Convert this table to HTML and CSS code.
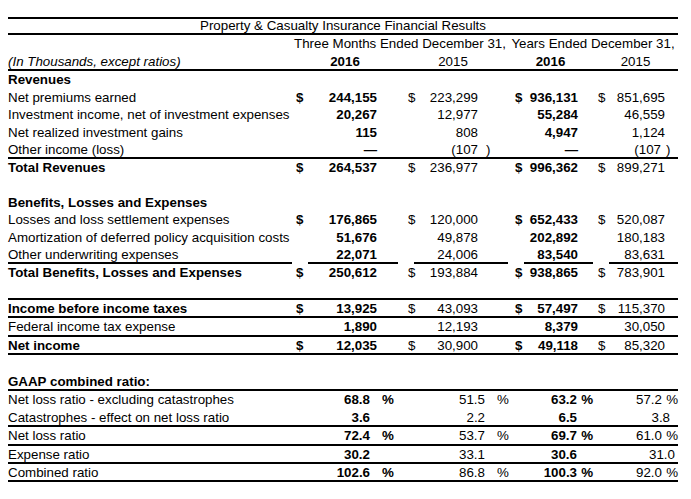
FILE: index.html
```html
<!DOCTYPE html>
<html>
<head>
<meta charset="utf-8">
<link rel="stylesheet" href="styles.css">
</head>
<body>
<div class="sheet">
  <div class="sec hdr">
    <div class="row ln-tb"><div class="title">Property &amp; Casualty Insurance Financial Results</div></div>
    <div class="row"><div></div><div class="per p1">Three Months Ended December 31,</div><div class="per p2">Years Ended December 31,</div></div>
    <div class="row ln-b"><div class="lbl it">(In Thousands, except ratios)</div><div class="yr b">2016</div><div class="yr">2015</div><div class="yr b">2016</div><div class="yr">2015</div></div>
  </div>

  <div class="sec s1">
    <div class="row"><div class="lbl b">Revenues</div></div>
    <div class="row"><div class="lbl">Net premiums earned</div>
      <div class="c c1 b"><span class="d">$</span><span class="n">244,155</span><span class="s"></span></div>
      <div class="c c2"><span class="d">$</span><span class="n">223,299</span><span class="s"></span></div>
      <div class="c c3 b"><span class="d">$</span><span class="n">936,131</span><span class="s"></span></div>
      <div class="c c4"><span class="d">$</span><span class="n">851,695</span><span class="s"></span></div>
    </div>
    <div class="row"><div class="lbl">Investment income, net of investment expenses</div>
      <div class="c c1 b"><span class="n">20,267</span><span class="s"></span></div>
      <div class="c c2"><span class="n">12,977</span><span class="s"></span></div>
      <div class="c c3 b"><span class="n">55,284</span><span class="s"></span></div>
      <div class="c c4"><span class="n">46,559</span><span class="s"></span></div>
    </div>
    <div class="row"><div class="lbl">Net realized investment gains</div>
      <div class="c c1 b"><span class="n">115</span><span class="s"></span></div>
      <div class="c c2"><span class="n">808</span><span class="s"></span></div>
      <div class="c c3 b"><span class="n">4,947</span><span class="s"></span></div>
      <div class="c c4"><span class="n">1,124</span><span class="s"></span></div>
    </div>
    <div class="row ln-b"><div class="lbl">Other income (loss)</div>
      <div class="c c1 b"><span class="n">—</span><span class="s"></span></div>
      <div class="c c2"><span class="n">(107</span><span class="s p">)</span></div>
      <div class="c c3 b"><span class="n">—</span><span class="s"></span></div>
      <div class="c c4"><span class="n">(107</span><span class="s p">)</span></div>
    </div>
    <div class="row"><div class="lbl b">Total Revenues</div>
      <div class="c c1 b"><span class="d">$</span><span class="n">264,537</span><span class="s"></span></div>
      <div class="c c2"><span class="d">$</span><span class="n">236,977</span><span class="s"></span></div>
      <div class="c c3 b"><span class="d">$</span><span class="n">996,362</span><span class="s"></span></div>
      <div class="c c4"><span class="d">$</span><span class="n">899,271</span><span class="s"></span></div>
    </div>
    <div class="row"></div>
    <div class="row"><div class="lbl b">Benefits, Losses and Expenses</div></div>
    <div class="row"><div class="lbl">Losses and loss settlement expenses</div>
      <div class="c c1 b"><span class="d">$</span><span class="n">176,865</span><span class="s"></span></div>
      <div class="c c2"><span class="d">$</span><span class="n">120,000</span><span class="s"></span></div>
      <div class="c c3 b"><span class="d">$</span><span class="n">652,433</span><span class="s"></span></div>
      <div class="c c4"><span class="d">$</span><span class="n">520,087</span><span class="s"></span></div>
    </div>
    <div class="row"><div class="lbl">Amortization of deferred policy acquisition costs</div>
      <div class="c c1 b"><span class="n">51,676</span><span class="s"></span></div>
      <div class="c c2"><span class="n">49,878</span><span class="s"></span></div>
      <div class="c c3 b"><span class="n">202,892</span><span class="s"></span></div>
      <div class="c c4"><span class="n">180,183</span><span class="s"></span></div>
    </div>
    <div class="row"><div class="lbl ln-b">Other underwriting expenses</div>
      <div class="c c1 b seg"><span class="n">22,071</span><span class="s"></span></div>
      <div class="c c2 seg"><span class="n">24,006</span><span class="s"></span></div>
      <div class="c c3 b seg"><span class="n">83,540</span><span class="s"></span></div>
      <div class="c c4 seg"><span class="n">83,631</span><span class="s"></span></div>
    </div>
  </div>

  <div class="sec s2">
    <div class="row"><div class="lbl b">Total Benefits, Losses and Expenses</div>
      <div class="c c1 b"><span class="d">$</span><span class="n">250,612</span><span class="s"></span></div>
      <div class="c c2"><span class="d">$</span><span class="n">193,884</span><span class="s"></span></div>
      <div class="c c3 b"><span class="d">$</span><span class="n">938,865</span><span class="s"></span></div>
      <div class="c c4"><span class="d">$</span><span class="n">783,901</span><span class="s"></span></div>
    </div>
    <div class="row ln-b"></div>
    <div class="row ln-b"><div class="lbl b">Income before income taxes</div>
      <div class="c c1 b"><span class="d">$</span><span class="n">13,925</span><span class="s"></span></div>
      <div class="c c2"><span class="d">$</span><span class="n">43,093</span><span class="s"></span></div>
      <div class="c c3 b"><span class="d">$</span><span class="n">57,497</span><span class="s"></span></div>
      <div class="c c4"><span class="d">$</span><span class="n">115,370</span><span class="s"></span></div>
    </div>
    <div class="row ln-b"><div class="lbl">Federal income tax expense</div>
      <div class="c c1 b"><span class="n">1,890</span><span class="s"></span></div>
      <div class="c c2"><span class="n">12,193</span><span class="s"></span></div>
      <div class="c c3 b"><span class="n">8,379</span><span class="s"></span></div>
      <div class="c c4"><span class="n">30,050</span><span class="s"></span></div>
    </div>
    <div class="row ln-b"><div class="lbl b">Net income</div>
      <div class="c c1 b"><span class="d">$</span><span class="n">12,035</span><span class="s"></span></div>
      <div class="c c2"><span class="d">$</span><span class="n">30,900</span><span class="s"></span></div>
      <div class="c c3 b"><span class="d">$</span><span class="n">49,118</span><span class="s"></span></div>
      <div class="c c4"><span class="d">$</span><span class="n">85,320</span><span class="s"></span></div>
    </div>
    <div class="row"></div>
    <div class="row ln-b"><div class="lbl b">GAAP combined ratio:</div></div>
    <div class="row"><div class="lbl">Net loss ratio - excluding catastrophes</div>
      <div class="c c1 r b"><span class="n">68.8</span><span class="s">%</span></div>
      <div class="c c2 r"><span class="n">51.5</span><span class="s">%</span></div>
      <div class="c c3 r b"><span class="n">63.2</span><span class="s">%</span></div>
      <div class="c c4 r"><span class="n">57.2</span><span class="s">%</span></div>
    </div>
    <div class="row ln-b"><div class="lbl">Catastrophes - effect on net loss ratio</div>
      <div class="c c1 r b"><span class="n">3.6</span><span class="s"></span></div>
      <div class="c c2 r"><span class="n">2.2</span><span class="s"></span></div>
      <div class="c c3 r b"><span class="n">6.5</span><span class="s"></span></div>
      <div class="c c4"><span class="n">3.8</span><span class="s x1"></span></div>
    </div>
    <div class="row ln-b"><div class="lbl">Net loss ratio</div>
      <div class="c c1 r b"><span class="n">72.4</span><span class="s">%</span></div>
      <div class="c c2 r"><span class="n">53.7</span><span class="s">%</span></div>
      <div class="c c3 r b"><span class="n">69.7</span><span class="s">%</span></div>
      <div class="c c4 r"><span class="n">61.0</span><span class="s">%</span></div>
    </div>
    <div class="row ln-b"><div class="lbl">Expense ratio</div>
      <div class="c c1 r b"><span class="n">30.2</span><span class="s"></span></div>
      <div class="c c2 r"><span class="n">33.1</span><span class="s"></span></div>
      <div class="c c3 r b"><span class="n">30.6</span><span class="s"></span></div>
      <div class="c c4"><span class="n">31.0</span><span class="s x2"></span></div>
    </div>
    <div class="row ln-b"><div class="lbl">Combined ratio</div>
      <div class="c c1 r b"><span class="n">102.6</span><span class="s">%</span></div>
      <div class="c c2 r"><span class="n">86.8</span><span class="s">%</span></div>
      <div class="c c3 r b"><span class="n">100.3</span><span class="s">%</span></div>
      <div class="c c4 r"><span class="n">92.0</span><span class="s">%</span></div>
    </div>
  </div>
</div>
</body>
</html>
```

FILE: styles.css
```css
* { box-sizing: border-box; }
html, body { margin: 0; padding: 0; background: #fff; }
body {
  font-family: "Liberation Sans", Arial, sans-serif;
  font-size: 13.33px;
  color: #000;
}
.sheet { width: 670px; margin: 17px 0 0 8px; }
.row {
  display: grid;
  grid-template-columns: 284px 106px 110px 85px 85px;
  white-space: nowrap;
}
.hdr .row { height: 18px; line-height: 18px; }
.s1 .row { height: 17.55px; line-height: 17.55px; }
.s2 .row { height: 18.17px; line-height: 18.17px; }

.title { grid-column: 1 / -1; text-align: center; }
.p1 { grid-column: 2 / 4; text-align: center; }
.p2 { grid-column: 4 / 6; text-align: center; }
.yr { text-align: center; }
.it { font-style: italic; }
.b { font-weight: bold; }

.ln-b { background: linear-gradient(#000, #000) left bottom / 100% 2px no-repeat; }
.ln-tb {
  background:
    linear-gradient(#000, #000) left top / 100% 2px no-repeat,
    linear-gradient(#000, #000) left bottom / 100% 2px no-repeat;
}
.seg { background: linear-gradient(#000, #000) right bottom / calc(100% - 16px) 2px no-repeat; }

.c { display: flex; }
.c .n { margin-left: auto; }
.c .s { flex: none; }

.c1 { padding-left: 4px; }
.c1 .s { width: 21px; }
.c1.r .s { width: 28px; padding-left: 12px; }

.c2 { padding-left: 10px; }
.c2 .s { width: 30px; }
.c2 .s.p { padding-left: 8px; }
.c2.r .s { width: 23px; padding-left: 12px; }

.c3 { padding-left: 7px; }
.c3 .s { width: 15px; }
.c3.r .s { width: 16px; text-align: right; }

.c4 { padding-left: 5px; }
.c4 .s { width: 13px; }
.c4 .s.p { width: 17px; padding-left: 5px; }
.c4.r .s { width: 16px; text-align: right; }
.c4 .s.x1 { width: 8px; }
.c4 .s.x2 { width: 3px; }
```
